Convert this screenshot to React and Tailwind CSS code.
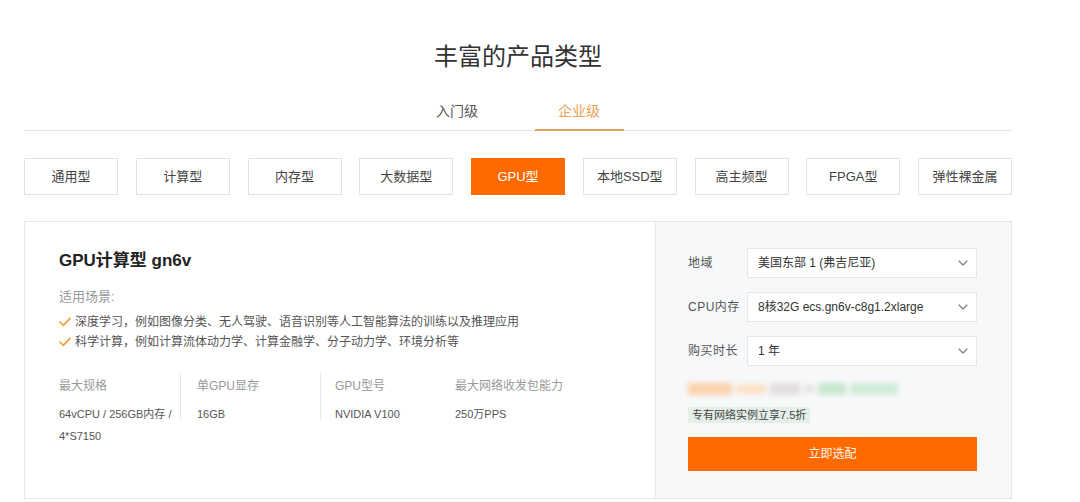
import React from "react";

const font = { fontFamily: '"Liberation Sans", "Noto Sans CJK SC", sans-serif' };

const types = ["通用型", "计算型", "内存型", "大数据型", "GPU型", "本地SSD型", "高主频型", "FPGA型", "弹性裸金属"];

function Check() {
  return (
    <svg width="12" height="10" viewBox="0 0 12 10" className="mr-[4px] shrink-0">
      <path d="M1 5.2 L4.3 8.4 L11 1.4" fill="none" stroke="#f2a03d" strokeWidth="1.7" strokeLinecap="round" strokeLinejoin="round" />
    </svg>
  );
}

function Chevron() {
  return (
    <svg width="10" height="6" viewBox="0 0 10 6">
      <path d="M1 1 L5 5 L9 1" fill="none" stroke="#777" strokeWidth="1.1" strokeLinecap="round" strokeLinejoin="round" />
    </svg>
  );
}

function Select({ label, value }) {
  return (
    <div className="flex items-center">
      <div className="w-[59px] text-[12px] text-[#555] tracking-[0.5px]">{label}</div>
      <div className="w-[230px] h-[30px] bg-white border border-[#e6e6e6] flex items-center justify-between pl-[10px] pr-[8px]">
        <span className="text-[12px] text-[#333]">{value}</span>
        <Chevron />
      </div>
    </div>
  );
}

export default function App() {
  return (
    <div className="w-[1080px] h-[502px] bg-white overflow-hidden" style={font}>
      <div className="ml-[24px] w-[988px]">
        <div className="pt-[41px] text-center text-[24px] leading-[32px] text-[#333]">丰富的产品类型</div>
        <div className="mt-[28px] border-b border-[#e4e4e4] flex justify-center gap-[33px]">
          <div className="w-[89px] text-center text-[14px] leading-[20px] pb-[8px] text-[#555] border-b-2 border-transparent -mb-px">入门级</div>
          <div className="w-[89px] text-center text-[14px] leading-[20px] pb-[8px] text-[#e9a055] border-b-2 border-[#dfa261] -mb-px">企业级</div>
        </div>
        <div className="mt-[27px] flex justify-between">
          {types.map((t) => (
            <div
              key={t}
              className={
                t === "GPU型"
                  ? "w-[94px] h-[37px] flex items-center justify-center text-[13px] bg-[#ff6a00] text-white border border-[#ff6a00]"
                  : "w-[94px] h-[37px] flex items-center justify-center text-[13px] text-[#444] border border-[#e3e3e3] bg-white"
              }
            >
              {t}
            </div>
          ))}
        </div>
        <div className="mt-[26px] h-[278px] border border-[#e6e6e6] flex">
          <div className="w-[630px] pl-[34px] pt-[27px]">
            <div className="text-[17px] leading-[24px] font-bold text-[#222]">GPU计算型 gn6v</div>
            <div className="mt-[14px] text-[13px] leading-[20px] text-[#999]">适用场景:</div>
            <div className="mt-[5px] flex items-center text-[12px] leading-[20px] text-[#555]">
              <Check />深度学习，例如图像分类、无人驾驶、语音识别等人工智能算法的训练以及推理应用
            </div>
            <div className="flex items-center text-[12px] leading-[20px] text-[#555]">
              <Check />科学计算，例如计算流体动力学、计算金融学、分子动力学、环境分析等
            </div>
            <div className="mt-[24px] flex items-start">
              <div className="w-[121px]">
                <div className="text-[12px] leading-[20px] text-[#999]">最大规格</div>
                <div className="mt-[7px] text-[11px] leading-[22px] text-[#555]">
                  64vCPU / 256GB内存 /<br />4*S7150
                </div>
              </div>
              <div className="w-px h-[47px] bg-[#e8e8e8] -mt-[3px]" />
              <div className="w-[139px] pl-[16px]">
                <div className="text-[12px] leading-[20px] text-[#999]">单GPU显存</div>
                <div className="mt-[7px] text-[11px] leading-[22px] text-[#555]">16GB</div>
              </div>
              <div className="w-px h-[47px] bg-[#e8e8e8] -mt-[3px]" />
              <div className="w-[134px] pl-[14px]">
                <div className="text-[12px] leading-[20px] text-[#999]">GPU型号</div>
                <div className="mt-[7px] text-[11px] leading-[22px] text-[#555]">NVIDIA V100</div>
              </div>
              <div>
                <div className="text-[12px] leading-[20px] text-[#999]">最大网络收发包能力</div>
                <div className="mt-[7px] text-[11px] leading-[22px] text-[#555]">250万PPS</div>
              </div>
            </div>
          </div>
          <div className="flex-1 bg-[#f7f8fa] border-l border-[#e8e8e8] pl-[32px] pt-[26px]">
            <div className="flex flex-col gap-[14px]">
              <Select label="地域" value="美国东部 1 (弗吉尼亚)" />
              <Select label="CPU内存" value="8核32G ecs.gn6v-c8g1.2xlarge" />
              <Select label="购买时长" value="1 年" />
            </div>
            <div className="mt-[13px] h-[20px] flex items-center gap-[4px] blur-[2.5px]">
              <div className="w-[44px] h-[12px] bg-[#fbd3ad]" />
              <div className="w-[30px] h-[10px] bg-[#fbe2c8]" />
              <div className="w-[30px] h-[12px] bg-[#e4dede]" />
              <div className="w-[10px] h-[6px] bg-[#ddd]" />
              <div className="w-[28px] h-[12px] bg-[#c9e8cf]" />
              <div className="w-[48px] h-[12px] bg-[#d2ebd7]" />
            </div>
            <div className="mt-[8px] inline-flex items-center h-[16px] px-[4px] bg-[#e4efe9] text-[11px] text-[#444]">专有网络实例立享7.5折</div>
            <div className="mt-[11px] w-[289px] h-[34px] bg-[#ff6a00] flex items-center justify-center text-[12px] text-[#fff3e8]">立即选配</div>
          </div>
        </div>
      </div>
    </div>
  );
}
